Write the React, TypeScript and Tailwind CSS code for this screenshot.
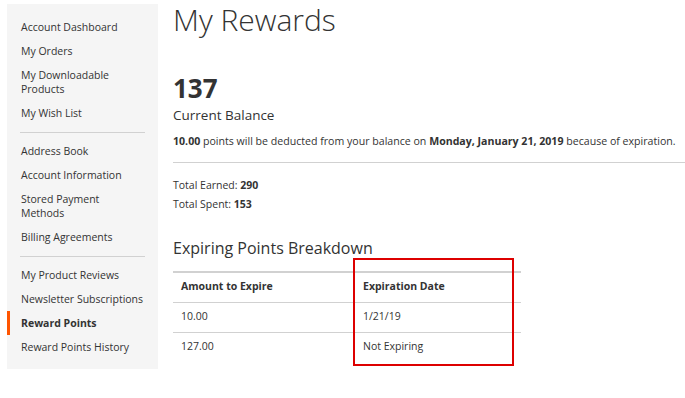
const groups: Array<Array<{ label: string[]; active?: boolean }>> = [
  [
    { label: ['Account Dashboard'] },
    { label: ['My Orders'] },
    { label: ['My Downloadable', 'Products'] },
    { label: ['My Wish List'] },
  ],
  [
    { label: ['Address Book'] },
    { label: ['Account Information'] },
    { label: ['Stored Payment', 'Methods'] },
    { label: ['Billing Agreements'] },
  ],
  [
    { label: ['My Product Reviews'] },
    { label: ['Newsletter Subscriptions'] },
    { label: ['Reward Points'], active: true },
    { label: ['Reward Points History'] },
  ],
]

const rows = [
  { amount: '10.00', date: '1/21/19' },
  { amount: '127.00', date: 'Not Expiring' },
]

function Sidebar() {
  return (
    <aside className="ml-[7px] mt-[4px] w-[151px] shrink-0 self-start bg-[#f5f5f5] pt-[11px] pb-[10px]">
      {groups.map((group, i) => (
        <div key={i}>
          {i > 0 && <div className="mx-[13px] mt-[7px] mb-[6px] h-px bg-[#d1d1d1]" />}
          {group.map((item) => (
            <div
              key={item.label.join(' ')}
              className={
                item.active
                  ? 'border-l-[3px] border-[#ff5501] py-[5px] pl-[11px] pr-[6px] text-[10.5px] leading-[14px] font-bold whitespace-nowrap text-[#333]'
                  : 'py-[5px] pl-[14px] pr-[6px] text-[10.5px] leading-[14px] whitespace-nowrap text-[#333]'
              }
            >
              {item.label.map((line) => (
                <div key={line}>{line}</div>
              ))}
            </div>
          ))}
        </div>
      ))}
    </aside>
  )
}

export default function App() {
  return (
    <div className="flex h-[398px] w-[685px] overflow-hidden bg-white text-[#333] [font-family:'Open_Sans',sans-serif]">
      <Sidebar />

      <main className="ml-[15px] flex-1">
        <h1 className="mt-[3px] text-[30px] leading-[33px] font-light">My Rewards</h1>

        <div className="mt-[38px] text-[26px] leading-[28px] font-bold">137</div>
        <div className="mt-[4px] text-[13.5px] leading-[18px]">Current Balance</div>
        <p className="mt-[9px] whitespace-nowrap text-[10.6px] leading-[16px]">
          <b>10.00</b> points will be deducted from your balance on{' '}
          <b>Monday, January 21, 2019</b> because of expiration.
        </p>

        <div className="mt-[13px] h-px bg-[#d1d1d1]" />

        <div className="mt-[13px] text-[10.5px] leading-[19px]">
          <div>
            Total Earned: <b>290</b>
          </div>
          <div>
            Total Spent: <b>153</b>
          </div>
        </div>

        <h2 className="mt-[23px] text-[16px] leading-[22px]">Expiring Points Breakdown</h2>

        <div className="relative mt-[12px] w-[348px]">
          <table className="w-full border-collapse border-t-2 border-[#d1d1d1] text-left text-[10.5px]">
            <thead>
              <tr className="border-b border-[#d1d1d1]">
                <th className="w-[182px] h-[30px] px-[8px] font-bold">Amount to Expire</th>
                <th className="h-[30px] px-[8px] font-bold">Expiration Date</th>
              </tr>
            </thead>
            <tbody>
              {rows.map((row, i) => (
                <tr key={row.amount} className={i === 0 ? 'border-b border-[#d1d1d1]' : ''}>
                  <td className="h-[30px] px-[8px]">{row.amount}</td>
                  <td className="h-[30px] px-[8px]">{row.date}</td>
                </tr>
              ))}
            </tbody>
          </table>

          <div className="pointer-events-none absolute left-[180px] top-[-13px] h-[108px] w-[161px] border-2 border-[#dd0000]" />
        </div>
      </main>
    </div>
  )
}
